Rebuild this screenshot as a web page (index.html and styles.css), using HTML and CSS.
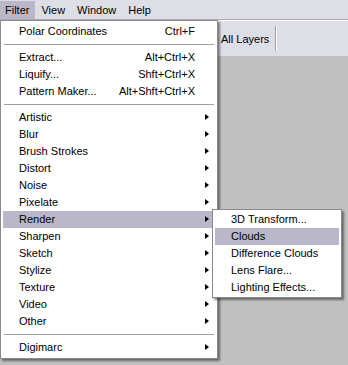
FILE: index.html
```html
<!DOCTYPE html>
<html lang="en">
  <head>
    <meta charset="utf-8">
    <title>Filter menu</title>
    <link rel="stylesheet" href="styles.css">
  </head>
  <body>

  <div class="menubar">
    <span class="menubar-item open">Filter</span>
    <span class="menubar-item">View</span>
    <span class="menubar-item">Window</span>
    <span class="menubar-item">Help</span>
  </div>

  <div class="toolbar">
    <span class="layers">All Layers</span>
    <span class="tool-sep"></span>
  </div>

  <div class="canvas"></div>

  <!-- Filter dropdown -->
  <div class="menu dropdown">
    <div class="item"><span class="label">Polar Coordinates</span><span class="key">Ctrl+F</span><span class="arrow"></span></div>
    <div class="sep"></div>
    <div class="item"><span class="label">Extract...</span><span class="key">Alt+Ctrl+X</span><span class="arrow"></span></div>
    <div class="item"><span class="label">Liquify...</span><span class="key">Shft+Ctrl+X</span><span class="arrow"></span></div>
    <div class="item"><span class="label">Pattern Maker...</span><span class="key">Alt+Shft+Ctrl+X</span><span class="arrow"></span></div>
    <div class="sep"></div>
    <div class="item sub"><span class="label">Artistic</span><span class="arrow"></span></div>
    <div class="item sub"><span class="label">Blur</span><span class="arrow"></span></div>
    <div class="item sub"><span class="label">Brush Strokes</span><span class="arrow"></span></div>
    <div class="item sub"><span class="label">Distort</span><span class="arrow"></span></div>
    <div class="item sub"><span class="label">Noise</span><span class="arrow"></span></div>
    <div class="item sub"><span class="label">Pixelate</span><span class="arrow"></span></div>
    <div class="item sub active"><span class="label">Render</span><span class="arrow"></span></div>
    <div class="item sub"><span class="label">Sharpen</span><span class="arrow"></span></div>
    <div class="item sub"><span class="label">Sketch</span><span class="arrow"></span></div>
    <div class="item sub"><span class="label">Stylize</span><span class="arrow"></span></div>
    <div class="item sub"><span class="label">Texture</span><span class="arrow"></span></div>
    <div class="item sub"><span class="label">Video</span><span class="arrow"></span></div>
    <div class="item sub"><span class="label">Other</span><span class="arrow"></span></div>
    <div class="sep"></div>
    <div class="item sub"><span class="label">Digimarc</span><span class="arrow"></span></div>
  </div>

  <!-- Render submenu -->
  <div class="menu submenu">
    <div class="item"><span class="label">3D Transform...</span></div>
    <div class="item active"><span class="label">Clouds</span></div>
    <div class="item"><span class="label">Difference Clouds</span></div>
    <div class="item"><span class="label">Lens Flare...</span></div>
    <div class="item"><span class="label">Lighting Effects...</span></div>
  </div>

  </body>
</html>
```

FILE: styles.css
```css
html {
  height: 100%;
}
body {
  margin: 0;
  padding: 0;
  height: 100%;
  background: #c0c0c0;
  color: #000000;
  font-family: "Liberation Sans", Arial, sans-serif;
  font-size: 11px;
  display: flex;
  flex-direction: column;
}
.menubar {
  height: 20px;
  display: flex;
  align-items: center;
  background: #dedee6;
  border-bottom: 1px solid #a9a9b2;
  box-sizing: border-box;
  padding-left: 0;
}
.menubar-item {
  padding: 0 6px 0 5px;
  margin-right: 1px;
  line-height: 18px;
}
.menubar-item.open {
  background: #bab7c9;
}
.toolbar {
  height: 36px;
  display: flex;
  align-items: center;
  background: #dedee6;
  border-top: 1px solid #ffffff;
  box-sizing: border-box;
  padding-left: 221px;
}
.layers {
  width: 54px;
}
.tool-sep {
  width: 1px;
  height: 25px;
  background: #9c9ca4;
  border-right: 1px solid #ffffff;
}
.canvas {
  flex: 1;
}
.menu {
  position: absolute;
  background: #ffffff;
  border: 1px solid #8a8a8a;
  padding: 2px;
  box-shadow: 2px 2px 2px rgba(0, 0, 0, 0.45);
}
.dropdown {
  left: 0;
  top: 20px;
  width: 212px;
}
.submenu {
  left: 212px;
  top: 209px;
  width: 124px;
  padding: 1px 2px;
}
.item {
  display: flex;
  align-items: center;
  height: 17px;
  line-height: 17px;
  padding-left: 16px;
  white-space: nowrap;
}
.item.active {
  background: #bab7c9;
}
.label {
  flex: 1;
}
.key {
  text-align: right;
}
.arrow {
  width: 20px;
  height: 17px;
  position: relative;
}
.sub .arrow::after {
  content: "";
  position: absolute;
  left: 10px;
  top: 5px;
  border-left: 4px solid #000000;
  border-top: 3.5px solid transparent;
  border-bottom: 3.5px solid transparent;
}
.sep {
  height: 9px;
  position: relative;
}
.sep::after {
  content: "";
  position: absolute;
  left: 1px;
  right: 1px;
  top: 4px;
  border-top: 1px solid #a0a0a0;
}
```
